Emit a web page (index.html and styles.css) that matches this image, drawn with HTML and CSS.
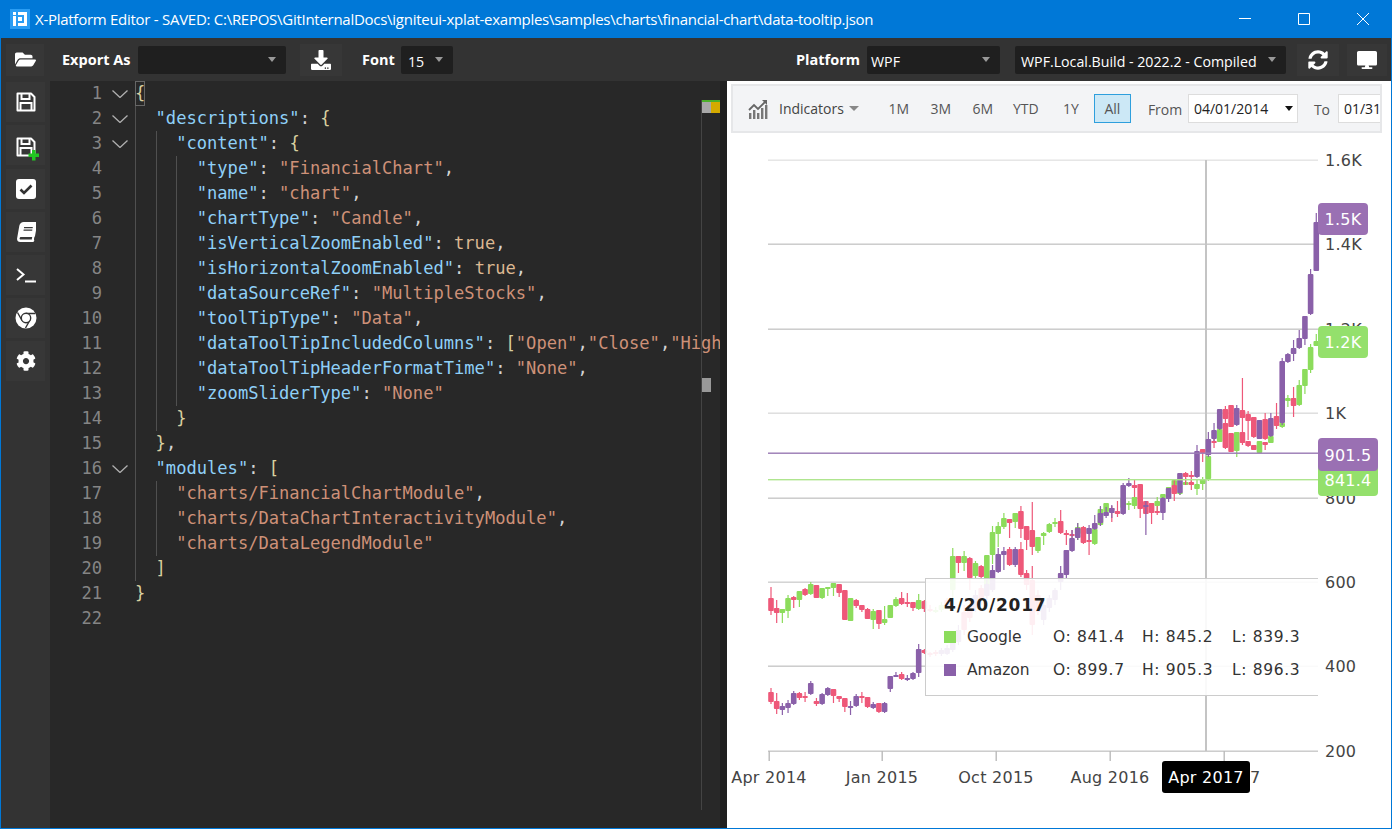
FILE: index.html
```html
<!DOCTYPE html>
<html lang="en">
  <head>
    <meta charset="UTF-8" />
    <meta name="viewport" content="width=device-width, initial-scale=1.0" />
    <title>X-Platform Editor</title>
    <link rel="stylesheet" href="styles.css">
  </head>
  <body>
    <div class="window">
      <div class="titlebar">
        <svg class="app-logo" viewBox="0 0 20 20">
          <rect width="20" height="20" fill="#2a9df4" />
          <path fill="#fff" d="M3 3h3v3H3zM3 7h3v10H3zM8 3h9v14H8v-3h6V6H8z" />
          <path fill="#fff" d="M8 8h4v4H8z" />
        </svg>
        <div class="title-text">X-Platform Editor - SAVED: C:\REPOS\GitInternalDocs\igniteui-xplat-examples\samples\charts\financial-chart\data-tooltip.json</div>
        <div class="win-btn">
          <svg width="14" height="14" viewBox="0 0 14 14"><path d="M1 6.5h12" stroke="#fff" fill="none" /></svg>
        </div>
        <div class="win-btn">
          <svg width="14" height="14" viewBox="0 0 14 14"><path d="M1.5 1.5h11v11h-11z" stroke="#fff" fill="none" /></svg>
        </div>
        <div class="win-btn">
          <svg width="14" height="14" viewBox="0 0 14 14"><path d="M1 1l12 12M13 1L1 13" stroke="#fff" fill="none" /></svg>
        </div>
      </div>

      <div class="toolbar">
        <div class="tool-btn open-btn">
          <svg width="21" height="19" viewBox="0 0 576 512"><path fill="#fff" d="M572.694 292.093L500.27 416.248A63.997 63.997 0 0 1 444.989 448H45.025c-18.523 0-30.064-20.093-20.731-36.093l72.424-124.155A64 64 0 0 1 152 256h399.964c18.523 0 30.064 20.093 20.73 36.093zM152 224h328v-48c0-26.51-21.49-48-48-48H272l-64-64H48C21.49 64 0 85.49 0 112v278.046l69.077-118.418C86.214 242.25 117.989 224 152 224z" /></svg>
        </div>
        <span class="tool-label export-label">Export As</span>
        <div class="combo export-combo"><span></span><i class="caret"></i></div>
        <div class="tool-btn download-btn">
          <svg width="20" height="20" viewBox="0 0 512 512"><path fill="#fff" d="M216 0h80c13.3 0 24 10.7 24 24v168h87.7c17.8 0 26.7 21.5 14.1 34.1L269.7 378.3c-7.5 7.5-19.8 7.5-27.3 0L90.1 226.1c-12.6-12.6-3.7-34.1 14.1-34.1H192V24c0-13.3 10.7-24 24-24zm296 376v112c0 13.3-10.7 24-24 24H24c-13.3 0-24-10.7-24-24V376c0-13.3 10.7-24 24-24h146.7l49 49c20.1 20.1 52.5 20.1 72.6 0l49-49H488c13.3 0 24 10.7 24 24zm-124 88c0-11-9-20-20-20s-20 9-20 20 9 20 20 20 20-9 20-20zm64 0c0-11-9-20-20-20s-20 9-20 20 9 20 20 20 20-9 20-20z" /></svg>
        </div>
        <span class="tool-label font-label">Font</span>
        <div class="combo font-combo"><span>15</span><i class="caret"></i></div>
        <span class="tool-label platform-label">Platform</span>
        <div class="combo platform-combo"><span>WPF</span><i class="caret"></i></div>
        <div class="combo build-combo"><span>WPF.Local.Build - 2022.2 - Compiled</span><i class="caret"></i></div>
        <div class="tool-btn refresh-btn">
          <svg width="20" height="20" viewBox="0 0 512 512"><path fill="#fff" d="M370.72 133.28C339.458 104.008 298.888 87.962 255.848 88c-77.458.068-144.328 53.178-162.791 126.85-1.344 5.363-6.122 9.15-11.651 9.15H24.103c-7.498 0-13.194-6.807-11.807-14.176C33.933 94.924 134.813 8 256 8c66.448 0 126.791 26.136 171.315 68.685L463.03 40.97C478.149 25.851 504 36.559 504 57.941V192c0 13.255-10.745 24-24 24H345.941c-21.382 0-32.09-25.851-16.971-40.971l41.75-41.749zM32 296h134.059c21.382 0 32.09 25.851 16.971 40.971l-41.75 41.75c31.262 29.273 71.835 45.319 114.876 45.28 77.418-.07 144.315-53.144 162.787-126.849 1.344-5.363 6.122-9.15 11.651-9.15h57.304c7.498 0 13.194 6.807 11.807 14.176C478.067 417.076 377.187 504 256 504c-66.448 0-126.791-26.136-171.315-68.685L48.97 471.03C33.851 486.149 8 475.441 8 454.059V320c0-13.255 10.745-24 24-24z" /></svg>
        </div>
        <div class="tool-btn monitor-btn">
          <svg width="20" height="18" viewBox="0 0 576 512"><path fill="#fff" d="M528 0H48C21.5 0 0 21.5 0 48v320c0 26.5 21.5 48 48 48h192l-16 48h-72c-13.3 0-24 10.7-24 24s10.7 24 24 24h272c13.3 0 24-10.7 24-24s-10.7-24-24-24h-72l-16-48h192c26.5 0 48-21.5 48-48V48c0-26.5-21.5-48-48-48z" /></svg>
        </div>
      </div>

      <div class="main">
        <div class="sidebar">
          <div class="side-btn">
            <svg width="20" height="20" viewBox="0 0 20 20"><path d="M1.5 1.5h13.5l3.5 3.5v13.5h-17z" fill="none" stroke="#fff" stroke-width="2" stroke-linejoin="round" /><path d="M5.5 2v5h8V2M4.5 18v-7h11v7" fill="none" stroke="#fff" stroke-width="2" /></svg>
          </div>
          <div class="side-btn save-as-btn">
            <svg width="25" height="25" viewBox="0 0 25 25"><path d="M1.5 1.5h13.5l3.5 3.5v13.5h-17z" fill="none" stroke="#fff" stroke-width="2" stroke-linejoin="round" /><path d="M5.5 2v5h8V2M4.5 18v-7h11v7" fill="none" stroke="#fff" stroke-width="2" /><path d="M16 13h3.5v3.5H23V20h-3.5v3.5H16V20h-3.5v-3.5H16z" fill="#22c722" /></svg>
          </div>
          <div class="side-btn">
            <svg width="20" height="20" viewBox="0 0 20 20"><rect width="20" height="20" rx="3" fill="#fff" /><path d="M4.5 10.5l3.5 3.5 7.5-7.5" fill="none" stroke="#333" stroke-width="2.6" /></svg>
          </div>
          <div class="side-btn">
            <svg width="20" height="20" viewBox="0 0 448 512"><path transform="translate(70 0) skewX(-10)" fill="#fff" d="M448 360V24c0-13.3-10.7-24-24-24H96C43 0 0 43 0 96v320c0 53 43 96 96 96h328c13.3 0 24-10.7 24-24v-16c0-7.5-3.5-14.3-8.9-18.7-4.2-15.4-4.2-59.3 0-74.7 5.4-4.3 8.9-11.1 8.9-18.6zM128 134c0-3.3 2.7-6 6-6h212c3.3 0 6 2.7 6 6v20c0 3.3-2.7 6-6 6H134c-3.3 0-6-2.7-6-6v-20zm0 64c0-3.3 2.7-6 6-6h212c3.3 0 6 2.7 6 6v20c0 3.3-2.7 6-6 6H134c-3.3 0-6-2.7-6-6v-20zm253.4 250H96c-17.7 0-32-14.3-32-32 0-17.6 14.4-32 32-32h285.4c-1.9 17.1-1.9 46.9 0 64z" /></svg>
          </div>
          <div class="side-btn">
            <svg width="20" height="16" viewBox="0 0 20 16"><path d="M1 2l6.5 5.5L1 13M9 14.5h11" fill="none" stroke="#fff" stroke-width="2" /></svg>
          </div>
          <div class="side-btn">
            <svg width="22" height="22" viewBox="0 0 22 22"><circle cx="11" cy="11" r="10.5" fill="#fff" /><path d="M11 6.5h9.5M7 13.5L2.5 5.5M15 13l-4.5 8" fill="none" stroke="#333" stroke-width="1.4" /><circle cx="11" cy="11" r="4.7" fill="#fff" stroke="#333" stroke-width="1.4" /></svg>
          </div>
          <div class="side-btn">
            <svg width="20" height="20" viewBox="0 0 512 512"><path fill="#fff" d="M487.4 315.7l-42.6-24.6c4.3-23.2 4.3-47 0-70.2l42.6-24.6c4.9-2.8 7.1-8.6 5.5-14-11.1-35.6-30-67.8-54.7-94.6-3.8-4.1-10-5.1-14.8-2.3L380.8 110c-17.9-15.4-38.5-27.3-60.8-35.1V25.8c0-5.6-3.9-10.5-9.4-11.7-36.7-8.2-74.3-7.8-109.2 0-5.5 1.2-9.4 6.1-9.4 11.7V75c-22.2 7.9-42.8 19.8-60.8 35.1L88.7 85.5c-4.9-2.8-11-1.9-14.8 2.3-24.7 26.7-43.6 58.9-54.7 94.6-1.7 5.4.6 11.2 5.5 14L67.3 221c-4.3 23.2-4.3 47 0 70.2l-42.6 24.6c-4.9 2.8-7.1 8.6-5.5 14 11.1 35.6 30 67.8 54.7 94.6 3.8 4.1 10 5.1 14.8 2.3l42.6-24.6c17.9 15.4 38.5 27.3 60.8 35.1v49.2c0 5.6 3.9 10.5 9.4 11.7 36.7 8.2 74.3 7.8 109.2 0 5.5-1.2 9.4-6.1 9.4-11.7v-49.2c22.2-7.9 42.8-19.8 60.8-35.1l42.6 24.6c4.9 2.8 11 1.9 14.8-2.3 24.7-26.7 43.6-58.9 54.7-94.6 1.5-5.5-.7-11.3-5.6-14.1zM256 336c-44.1 0-80-35.9-80-80s35.9-80 80-80 80 35.9 80 80-35.9 80-80 80z" /></svg>
          </div>
        </div>

        <div class="editor">
          <div class="line"><span class="ln">1</span><span class="fold"><svg width="16" height="8" viewBox="0 0 16 8"><path d="M.5.5L8 7.5 15.5.5" /></svg></span><span class="code"><span class="bracket match">{</span></span></div>
          <div class="line"><span class="ln">2</span><span class="fold"><svg width="16" height="8" viewBox="0 0 16 8"><path d="M.5.5L8 7.5 15.5.5" /></svg></span><span class="code"><i class="ig"></i><span class="key">"descriptions"</span>: <span class="bracket">{</span></span></div>
          <div class="line"><span class="ln">3</span><span class="fold"><svg width="16" height="8" viewBox="0 0 16 8"><path d="M.5.5L8 7.5 15.5.5" /></svg></span><span class="code"><i class="ig"></i><i class="ig"></i><span class="key">"content"</span>: <span class="bracket">{</span></span></div>
          <div class="line"><span class="ln">4</span><span class="fold"></span><span class="code"><i class="ig"></i><i class="ig"></i><i class="ig"></i><span class="key">"type"</span>: <span class="str">"FinancialChart"</span>,</span></div>
          <div class="line"><span class="ln">5</span><span class="fold"></span><span class="code"><i class="ig"></i><i class="ig"></i><i class="ig"></i><span class="key">"name"</span>: <span class="str">"chart"</span>,</span></div>
          <div class="line"><span class="ln">6</span><span class="fold"></span><span class="code"><i class="ig"></i><i class="ig"></i><i class="ig"></i><span class="key">"chartType"</span>: <span class="str">"Candle"</span>,</span></div>
          <div class="line"><span class="ln">7</span><span class="fold"></span><span class="code"><i class="ig"></i><i class="ig"></i><i class="ig"></i><span class="key">"isVerticalZoomEnabled"</span>: <span class="bool">true</span>,</span></div>
          <div class="line"><span class="ln">8</span><span class="fold"></span><span class="code"><i class="ig"></i><i class="ig"></i><i class="ig"></i><span class="key">"isHorizontalZoomEnabled"</span>: <span class="bool">true</span>,</span></div>
          <div class="line"><span class="ln">9</span><span class="fold"></span><span class="code"><i class="ig"></i><i class="ig"></i><i class="ig"></i><span class="key">"dataSourceRef"</span>: <span class="str">"MultipleStocks"</span>,</span></div>
          <div class="line"><span class="ln">10</span><span class="fold"></span><span class="code"><i class="ig"></i><i class="ig"></i><i class="ig"></i><span class="key">"toolTipType"</span>: <span class="str">"Data"</span>,</span></div>
          <div class="line"><span class="ln">11</span><span class="fold"></span><span class="code"><i class="ig"></i><i class="ig"></i><i class="ig"></i><span class="key">"dataToolTipIncludedColumns"</span>: <span class="bracket">[</span><span class="str">"Open"</span>,<span class="str">"Close"</span>,<span class="str">"High</span></span></div>
          <div class="line"><span class="ln">12</span><span class="fold"></span><span class="code"><i class="ig"></i><i class="ig"></i><i class="ig"></i><span class="key">"dataToolTipHeaderFormatTime"</span>: <span class="str">"None"</span>,</span></div>
          <div class="line"><span class="ln">13</span><span class="fold"></span><span class="code"><i class="ig"></i><i class="ig"></i><i class="ig"></i><span class="key">"zoomSliderType"</span>: <span class="str">"None"</span></span></div>
          <div class="line"><span class="ln">14</span><span class="fold"></span><span class="code"><i class="ig"></i><i class="ig"></i><span class="bracket">}</span></span></div>
          <div class="line"><span class="ln">15</span><span class="fold"></span><span class="code"><i class="ig"></i><span class="bracket">}</span>,</span></div>
          <div class="line"><span class="ln">16</span><span class="fold"><svg width="16" height="8" viewBox="0 0 16 8"><path d="M.5.5L8 7.5 15.5.5" /></svg></span><span class="code"><i class="ig"></i><span class="key">"modules"</span>: <span class="bracket">[</span></span></div>
          <div class="line"><span class="ln">17</span><span class="fold"></span><span class="code"><i class="ig"></i><i class="ig"></i><span class="str">"charts/FinancialChartModule"</span>,</span></div>
          <div class="line"><span class="ln">18</span><span class="fold"></span><span class="code"><i class="ig"></i><i class="ig"></i><span class="str">"charts/DataChartInteractivityModule"</span>,</span></div>
          <div class="line"><span class="ln">19</span><span class="fold"></span><span class="code"><i class="ig"></i><i class="ig"></i><span class="str">"charts/DataLegendModule"</span></span></div>
          <div class="line"><span class="ln">20</span><span class="fold"></span><span class="code"><i class="ig"></i><span class="bracket">]</span></span></div>
          <div class="line"><span class="ln">21</span><span class="fold"></span><span class="code"><span class="bracket">}</span></span></div>
          <div class="line"><span class="ln">22</span><span class="fold"></span><span class="code"></span></div>
          <div class="ruler">
            <div class="ruler-top"><i></i><i></i></div>
            <div class="ruler-thumb"></div>
          </div>
          <div class="editor-edge"></div>
        </div>

        <div class="chart-panel">
          <div class="chart-toolbar">
            <svg class="ind-icon" width="20" height="20" viewBox="0 0 20 20">
              <path d="M1 20v-6h2.4v6zM5 20v-9h2.4v9zM9 20v-6h2.4v6zM13 20V9h2.4v11zM17 20V6h2.4v14z" fill="#777" />
              <path d="M1 11l5-5 4 4 8-8" fill="none" stroke="#666" stroke-width="1.8" />
              <path d="M14 1h5v5z" fill="#666" />
            </svg>
            <span class="ind-label">Indicators</span>
            <i class="ind-caret"></i>
            <span class="range r1m">1M</span>
            <span class="range">3M</span>
            <span class="range">6M</span>
            <span class="range ytd">YTD</span>
            <span class="range r1y">1Y</span>
            <span class="range active">All</span>
            <span class="date-label from-label">From</span>
            <div class="date-box from-box"><span>04/01/2014</span><i class="date-caret"></i></div>
            <span class="date-label to-label">To</span>
            <div class="date-box to-box"><span>01/31/2018</span></div>
          </div>
          <div class="chart-area">
            <svg id="chart" class="chart-svg" width="663" height="695" viewBox="727 133 663 695"></svg>
            <div class="data-tooltip">
              <div class="tip-title">4/20/2017</div>
              <div class="tip-row">
                <i class="swatch swatch-google"></i><span>Google</span><span class="tip-val">O: 841.4</span><span class="tip-val">H: 845.2</span><span class="tip-val">L: 839.3</span><span class="tip-cut">C</span>
              </div>
              <div class="tip-row">
                <i class="swatch swatch-amazon"></i><span>Amazon</span><span class="tip-val">O: 899.7</span><span class="tip-val">H: 905.3</span><span class="tip-val">L: 896.3</span><span class="tip-cut">C</span>
              </div>
            </div>
          </div>
        </div>
      </div>
    </div>
    <script src="chart.js"></script>
  </body>
</html>
```

FILE: styles.css
```css
* {
  box-sizing: border-box;
}
body {
  margin: 0;
  font-family: "Open Sans", sans-serif;
  background-color: #fff;
}
.window {
  width: 1392px;
  height: 829px;
  display: flex;
  flex-direction: column;
  border: 1px solid #0078d7;
  border-top: none;
  overflow: hidden;
}

/* title bar */
.titlebar {
  height: 38px;
  flex: none;
  display: flex;
  align-items: center;
  background-color: #0078d7;
  color: #fff;
  margin: 0 -1px;
  padding-left: 10px;
}
.app-logo {
  width: 20px;
  height: 20px;
  flex: none;
}
.title-text {
  margin-left: 5px;
  font-size: 15px;
  letter-spacing: -0.27px;
  flex: 1;
  white-space: nowrap;
}
.win-btn {
  width: 59px;
  display: flex;
  justify-content: center;
}

/* top toolbar */
.toolbar {
  height: 43px;
  flex: none;
  display: flex;
  align-items: center;
  background-color: #333;
  color: #fff;
}
.tool-btn {
  height: 32px;
  display: flex;
  align-items: center;
  justify-content: center;
  background-color: #373737;
}
.tool-label {
  font-size: 14.5px;
  font-weight: 700;
}
.open-btn {
  width: 38px;
  margin-left: 5px;
}
.export-label {
  margin-left: 18px;
  width: 76px;
}
.combo {
  height: 28px;
  display: flex;
  align-items: center;
  justify-content: space-between;
  padding: 0 10px 0 4px;
  background-color: #1f1f1f;
  font-size: 14.2px;
  border-radius: 2px;
}
.combo span {
  padding-top: 3px;
  white-space: nowrap;
}
.caret {
  width: 0;
  height: 0;
  border-left: 4.5px solid transparent;
  border-right: 4.5px solid transparent;
  border-top: 5px solid #999;
}
.export-combo {
  width: 148px;
}
.download-btn {
  width: 42px;
  margin-left: 14px;
}
.font-label {
  margin-left: 20px;
  width: 39px;
}
.font-combo {
  width: 52px;
  padding-left: 7px;
}
.platform-label {
  margin-left: 343px;
  width: 71px;
}
.platform-combo {
  width: 133px;
}
.build-combo {
  width: 271px;
  margin-left: 15px;
  padding-left: 6px;
}
.refresh-btn {
  width: 42px;
  margin-left: 11px;
}
.monitor-btn {
  width: 40px;
  margin-left: 8px;
}

.main {
  flex: 1;
  display: flex;
  min-height: 0;
}

/* left icon strip */
.sidebar {
  width: 49px;
  flex: none;
  display: flex;
  flex-direction: column;
  background-color: #333;
  padding-top: 1px;
}
.side-btn {
  height: 40px;
  margin: 0 5px 3px 5px;
  display: flex;
  align-items: center;
  justify-content: center;
  background-color: #373737;
}
.save-as-btn {
  margin-bottom: 4px;
}
.save-as-btn svg {
  margin: 8px 0 0 5px;
}

/* code editor */
.editor {
  position: relative;
  width: 677px;
  flex: none;
  background-color: #282828;
  font-family: "DejaVu Sans Mono", monospace;
  font-size: 17.1px;
  color: #d4d4d4;
  overflow: hidden;
}
.line {
  height: 25px;
  display: flex;
  line-height: 25px;
  white-space: pre;
}
.ln {
  width: 52px;
  text-align: right;
  color: #858585;
  flex: none;
}
.fold {
  width: 33px;
  flex: none;
  display: flex;
  align-items: center;
  justify-content: center;
  padding-left: 3px;
}
.fold svg {
  stroke: #b0b0b0;
  fill: none;
  stroke-width: 1.3;
}
.code {
  display: flex;
  flex: none;
}
.ig {
  width: 2ch;
  height: 25px;
  flex: none;
  border-left: 1px solid #505050;
}
.key {
  color: #8fd0f8;
}
.str {
  color: #ce9178;
}
.bool {
  color: #dcb892;
}
.bracket {
  color: #d9d0a0;
}
.match {
  outline: 1px solid #666;
  outline-offset: -1px;
  box-shadow: inset 0 -1px 0 #a08020;
  height: 25px;
  width: 10px;
}
.ruler {
  position: absolute;
  left: 651px;
  top: 19px;
  bottom: 18px;
  width: 19px;
  border-left: 1px solid #444;
}
.ruler-top {
  display: flex;
  height: 13px;
  border-top: 2px solid #4caf2a;
}
.ruler-top i {
  width: 9px;
  background-color: #a8a8a8;
}
.ruler-top i + i {
  background-color: #d4aa00;
}
.ruler-thumb {
  width: 9px;
  height: 14px;
  margin-top: 265px;
  background-color: #999;
}
.editor-edge {
  position: absolute;
  right: 0;
  top: 0;
  bottom: 0;
  width: 7px;
  background-color: #1f1f1f;
}

/* chart panel */
.chart-panel {
  flex: 1;
  min-width: 0;
  display: flex;
  flex-direction: column;
  background-color: #fff;
}
.chart-toolbar {
  height: 49px;
  flex: none;
  margin: 3px 9px 0 4px;
  padding-left: 15px;
  display: flex;
  align-items: center;
  background-color: #f3f4f6;
  border: 2px solid #e6e7e9;
  color: #555;
  font-size: 14px;
  overflow: hidden;
}
.ind-icon {
  flex: none;
}
.ind-label {
  margin-left: 11px;
  color: #444;
  flex: none;
}
.ind-caret {
  margin-left: 5px;
  flex: none;
  border-left: 5px solid transparent;
  border-right: 5px solid transparent;
  border-top: 5px solid #888;
}
.range {
  width: 42px;
  text-align: center;
  flex: none;
}
.r1m {
  margin-left: 19px;
}
.ytd {
  width: 44px;
}
.r1y {
  margin-left: 2px;
}
.range.active {
  width: 37px;
  height: 29px;
  margin-left: 2px;
  line-height: 27px;
  background-color: #cce8f6;
  border: 1px solid #2e9fdd;
}
.date-label {
  padding-top: 2px;
  flex: none;
}
.from-label {
  margin-left: 17px;
  width: 40px;
}
.date-box {
  height: 29px;
  flex: none;
  display: flex;
  align-items: center;
  background-color: #fff;
  border: 1px solid #ddd;
  color: #222;
  padding-left: 5px;
  white-space: nowrap;
  overflow: hidden;
}
.from-box {
  width: 110px;
  justify-content: space-between;
  padding-right: 4px;
}
.date-caret {
  border-left: 4.5px solid transparent;
  border-right: 4.5px solid transparent;
  border-top: 5px solid #111;
}
.to-label {
  margin-left: 16px;
  width: 24px;
}
.to-box {
  width: 60px;
}
.chart-area {
  position: relative;
  flex: 1;
  min-height: 0;
}
.chart-svg {
  display: block;
  font-family: "DejaVu Sans", sans-serif;
  font-size: 16px;
  letter-spacing: 0.25px;
}
.data-tooltip {
  position: absolute;
  left: 198px;
  top: 445px;
  width: 393px;
  height: 118px;
  padding: 17px 0 0 18px;
  background-color: rgba(255, 255, 255, 0.9);
  border: 1px solid #ccc;
  border-right: none;
  font-family: "DejaVu Sans", sans-serif;
  font-size: 15.5px;
  color: #333;
  overflow: hidden;
  white-space: nowrap;
}
.tip-title {
  font-weight: 700;
  font-size: 17px;
  letter-spacing: 0.8px;
  color: #222;
  height: 21px;
  line-height: 21px;
  margin-bottom: 11px;
  margin-top: -1px;
}
.tip-row {
  display: grid;
  grid-template-columns: 23px 86px 89px 90px 86px 20px;
  height: 33px;
  line-height: 20px;
}
.tip-val {
  letter-spacing: 0.65px;
}
.swatch {
  width: 12px;
  height: 12px;
  margin-top: 4px;
}
.swatch-google {
  background-color: #8cdc5c;
}
.swatch-amazon {
  background-color: #8a60a9;
}
.tip-cut {
  color: #e8a050;
}
```

FILE: chart.js
```js
// candle rows are [x index, colour, wick top, wick bottom, body top, body bottom]
// colours: g = google up, p = amazon up, r = down
const google = [
  [0, "r", 587, 615, 598, 611], [1, "r", 600, 623, 608, 613], [2, "g", 609, 623, 609, 613],
  [3, "g", 595, 618, 598, 611], [4, "r", 596, 608, 597, 600], [5, "g", 591, 607, 591, 600],
  [6, "r", 588, 596, 589, 595], [7, "g", 582, 595, 584, 594], [8, "r", 585, 598, 585, 598],
  [9, "g", 588, 599, 588, 598], [10, "g", 587, 596, 587, 589], [11, "g", 583, 596, 583, 588],
  [12, "r", 584, 597, 584, 593], [13, "r", 590, 620, 590, 620], [14, "g", 598, 621, 598, 621],
  [15, "r", 599, 608, 600, 606], [16, "r", 605, 612, 605, 610], [17, "r", 608, 619, 609, 619],
  [18, "g", 609, 629, 611, 620], [19, "r", 610, 629, 610, 624], [20, "g", 606, 625, 619, 623],
  [21, "g", 605, 618, 605, 618], [22, "g", 597, 607, 599, 606], [23, "r", 592, 605, 598, 604],
  [24, "r", 593, 607, 602, 604], [25, "r", 602, 611, 602, 608], [26, "g", 594, 610, 600, 609],
  [27, "r", 600, 612, 601, 609], [28, "r", 605, 612, 609, 610], [29, "g", 607, 613, 610, 611],
  [30, "g", 602, 612, 605, 610], [31, "r", 598, 608, 600, 606], [32, "g", 548, 600, 556, 590],
  [33, "r", 556, 573, 556, 563], [34, "g", 551, 571, 556, 563], [35, "r", 557, 590, 558, 578],
  [36, "g", 561, 578, 563, 576], [37, "r", 565, 578, 566, 577], [38, "g", 555, 592, 555, 590],
  [39, "g", 526, 564, 532, 555], [40, "g", 522, 547, 526, 534], [41, "g", 513, 529, 518, 527],
  [42, "r", 519, 538, 519, 523], [43, "g", 513, 528, 513, 522], [44, "r", 506, 538, 511, 529],
  [45, "r", 526, 550, 526, 540], [46, "r", 502, 555, 530, 547], [47, "g", 537, 553, 537, 551],
  [48, "g", 532, 545, 533, 536], [49, "g", 523, 533, 524, 532], [50, "g", 518, 527, 522, 524],
  [51, "r", 510, 534, 521, 533], [52, "r", 530, 545, 533, 535], [53, "r", 530, 540, 534, 536],
  [54, "g", 523, 540, 527, 534], [55, "r", 526, 544, 527, 543], [56, "r", 534, 555, 540, 541],
  [57, "g", 529, 545, 529, 544], [58, "g", 507, 526, 509, 525], [59, "g", 503, 515, 503, 512],
  [60, "r", 506, 522, 508, 510], [61, "r", 501, 517, 511, 514], [62, "g", 495, 510, 498, 508],
  [63, "g", 501, 510, 503, 505], [64, "g", 497, 509, 497, 506], [65, "r", 484, 518, 484, 509],
  [66, "r", 501, 514, 501, 514], [67, "r", 503, 524, 503, 513], [68, "g", 497, 513, 501, 506],
  [69, "g", 494, 500, 494, 498], [70, "g", 487, 492, 487, 489], [71, "g", 480, 490, 480, 486],
  [72, "g", 490, 495, 492, 493], [73, "g", 478, 485, 482, 485], [74, "r", 480, 490, 482, 485],
  [75, "g", 480, 495, 484, 489], [76, "g", 477, 490, 479, 484], [77, "g", 454, 481, 456, 479],
  [78, "r", 438, 448, 441, 443], [79, "g", 429, 442, 429, 442], [80, "r", 423, 449, 423, 448],
  [81, "r", 433, 452, 433, 452], [82, "g", 432, 457, 432, 451], [83, "r", 432, 445, 432, 443],
  [84, "r", 441, 447, 441, 446], [85, "r", 445, 450, 445, 450], [86, "g", 441, 453, 441, 453],
  [87, "r", 442, 450, 442, 445], [88, "g", 436, 443, 436, 443], [90, "g", 423, 428, 423, 427],
  [91, "g", 395, 407, 398, 401], [92, "r", 387, 417, 398, 406], [93, "g", 380, 406, 385, 405],
  [94, "g", 369, 394, 369, 386], [95, "g", 344, 373, 347, 370], [96, "g", 334, 346, 341, 346],
];

const amazon = [
  [0, "r", 688, 704, 692, 702], [1, "r", 693, 714, 701, 709], [2, "p", 703, 715, 706, 710],
  [3, "p", 700, 713, 703, 708], [4, "p", 691, 705, 693, 704], [5, "r", 692, 700, 693, 698],
  [6, "r", 692, 702, 696, 698], [7, "p", 681, 695, 683, 694], [8, "r", 698, 706, 701, 704],
  [9, "p", 693, 705, 694, 704], [10, "p", 687, 696, 688, 695], [11, "r", 689, 703, 689, 696],
  [12, "r", 696, 702, 696, 699], [13, "r", 698, 712, 698, 707], [14, "p", 701, 715, 706, 707],
  [15, "p", 694, 707, 696, 706], [16, "r", 692, 703, 696, 698], [17, "r", 697, 708, 697, 707],
  [18, "p", 702, 709, 704, 708], [19, "r", 703, 713, 703, 712], [20, "p", 702, 713, 703, 712],
  [21, "p", 676, 692, 676, 689], [22, "p", 672, 677, 675, 676], [23, "r", 672, 680, 674, 679],
  [24, "p", 675, 681, 678, 679], [25, "p", 672, 680, 673, 679], [26, "p", 644, 677, 649, 673],
  [27, "r", 649, 654, 650, 653], [28, "r", 652, 657, 653, 655], [29, "r", 650, 656, 652, 654],
  [30, "p", 648, 656, 650, 654], [31, "p", 645, 655, 648, 654], [32, "p", 640, 652, 642, 650],
  [33, "p", 625, 645, 630, 642], [34, "r", 605, 635, 612, 630], [35, "r", 602, 622, 605, 618],
  [36, "p", 590, 612, 595, 608], [37, "r", 585, 605, 588, 600], [38, "p", 580, 600, 584, 596],
  [39, "p", 565, 592, 570, 590], [40, "p", 548, 573, 554, 572], [41, "p", 547, 570, 551, 555],
  [42, "r", 547, 566, 549, 565], [43, "p", 547, 567, 549, 565], [44, "r", 542, 577, 549, 575],
  [45, "r", 570, 590, 573, 585], [46, "r", 566, 635, 580, 625], [47, "r", 590, 615, 595, 612],
  [48, "p", 600, 625, 605, 620], [49, "p", 595, 612, 598, 608], [50, "p", 588, 605, 590, 600],
  [51, "p", 566, 590, 573, 582], [52, "p", 550, 578, 550, 575], [53, "p", 530, 552, 538, 551],
  [54, "p", 523, 540, 528, 538], [56, "p", 525, 540, 528, 534], [57, "p", 515, 530, 523, 529],
  [58, "p", 506, 526, 513, 523], [59, "p", 507, 518, 512, 516], [60, "p", 505, 518, 508, 513],
  [62, "p", 483, 515, 485, 514], [63, "p", 478, 487, 483, 486], [64, "r", 480, 497, 485, 488],
  [66, "p", 501, 535, 505, 506], [68, "r", 506, 515, 511, 512], [69, "p", 497, 520, 498, 513],
  [70, "p", 488, 502, 488, 499], [71, "r", 480, 501, 485, 494], [72, "p", 473, 495, 473, 493],
  [73, "r", 472, 485, 473, 477], [74, "r", 471, 482, 475, 477], [75, "p", 445, 478, 451, 477],
  [76, "r", 449, 462, 449, 453], [77, "p", 432, 457, 439, 455], [78, "p", 423, 441, 430, 439],
  [79, "p", 409, 430, 409, 429], [80, "r", 406, 425, 409, 419], [81, "r", 405, 427, 405, 427],
  [82, "p", 405, 426, 408, 425], [83, "r", 378, 440, 410, 418], [84, "r", 411, 440, 414, 421],
  [85, "r", 417, 438, 417, 437], [86, "p", 420, 439, 420, 439], [87, "r", 413, 440, 419, 439],
  [88, "p", 413, 437, 418, 436], [89, "r", 403, 429, 416, 426], [90, "p", 358, 425, 361, 423],
  [91, "p", 353, 363, 354, 362], [92, "p", 340, 361, 348, 354], [93, "p", 330, 349, 338, 348],
  [94, "p", 316, 345, 316, 339], [95, "p", 269, 315, 274, 314], [96, "p", 213, 271, 222, 271],
];

const colours = { g: "#8cdc5c", p: "#8a60a9", r: "#ee5879" };
const chart = document.getElementById("chart");

function add(tag, attrs, text) {
  const el = document.createElementNS("http://www.w3.org/2000/svg", tag);
  for (const name in attrs) {
    el.setAttribute(name, attrs[name]);
  }
  if (text) {
    el.textContent = text;
  }
  chart.appendChild(el);
}

// grid lines and y labels
const yTicks = [
  [160, "1.6K", "#e4e4e4"], [244, "1.4K", "#c8c8c8"], [329, "1.2K", "#c8c8c8"], [413, "1K", "#dcdcdc"],
  [498, "800", "#c8c8c8"], [582, "600", "#d0d0d0"], [666, "400", "#c8c8c8"], [751, "200", "#c8c8c8"],
];
yTicks.forEach(([y, label, colour]) => {
  add("rect", { x: 768, y: y - 0.5, width: 550, height: 1.4, fill: colour });
  add("text", { x: 1325, y: y + 6, fill: "#444" }, label);
});

// x axis
[[769, "Apr 2014"], [882, "Jan 2015"], [996, "Oct 2015"], [1110, "Aug 2016"], [1224, "Jun 2017"]].forEach(([x, label]) => {
  add("rect", { x: x - 0.5, y: 751, width: 1.4, height: 10, fill: "#bbb" });
  add("text", { x: x, y: 783, fill: "#444", "text-anchor": "middle" }, label);
});

// crosshair
add("rect", { x: 1205, y: 160, width: 2, height: 591, fill: "#c4c4c4" });

// candles, google under amazon
[google, amazon].forEach((series) => {
  series.forEach(([i, colour, hi, lo, top, bottom]) => {
    const x = 771 + i * 5.68;
    add("rect", { x: x - 0.6, y: hi, width: 1.2, height: lo - hi, fill: colours[colour] });
    add("rect", { x: x - 2.8, y: top, width: 5.6, height: Math.max(bottom - top, 2), rx: 1, fill: colours[colour] });
  });
});

// last value lines
add("rect", { x: 768, y: 452.5, width: 550, height: 1.4, fill: "#9a7ab4" });
add("rect", { x: 768, y: 479, width: 550, height: 1.4, fill: "#afe58f" });

// value tags
[
  [1318, 203, 50, 32, "#9a70b3", "1.5K"],
  [1318, 326, 50, 32, "#94e06c", "1.2K"],
  [1318, 465, 60, 31, "#94e06c", "841.4"],
  [1318, 438, 60, 33, "#9a70b3", "901.5"],
].forEach(([x, y, w, h, fill, label]) => {
  add("rect", { x: x, y: y, width: w, height: h, rx: 4, fill: fill });
  const textY = label === "841.4" ? y + 21 : y + h / 2 + 6;
  add("text", { x: x + w / 2, y: textY, fill: "#fff", "text-anchor": "middle" }, label);
});

// crosshair date tag
add("rect", { x: 1162, y: 761, width: 88, height: 32, rx: 3, fill: "#000" });
add("text", { x: 1206, y: 783, fill: "#fff", "text-anchor": "middle" }, "Apr 2017");
```
